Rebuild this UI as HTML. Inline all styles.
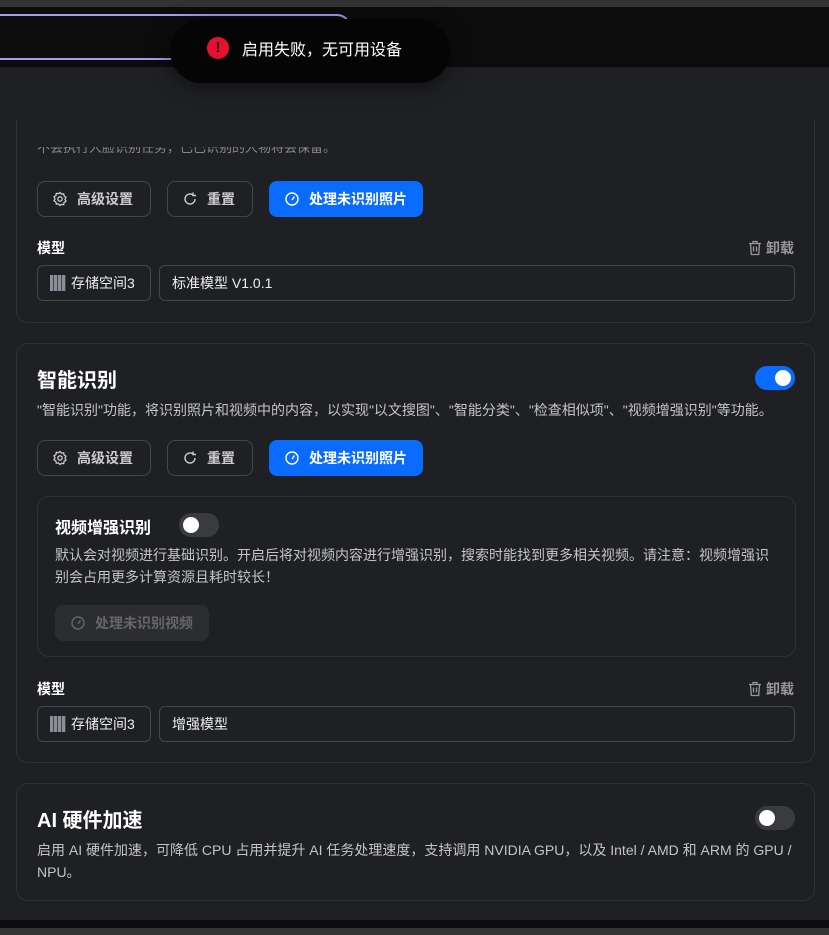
<!DOCTYPE html>
<html><head><meta charset="utf-8"><style>
*{box-sizing:border-box;margin:0;padding:0}
body{width:829px;height:935px;overflow:hidden;background:#1f2023;font-family:"Liberation Sans","Noto Sans CJK SC",sans-serif;color:#e6e6e6;position:relative}
.top{position:absolute;left:0;top:0;width:829px;height:7px;background:#333}
.hdr{position:absolute;left:0;top:7px;width:829px;height:60px;background:#0c0c0c}
.search{position:absolute;left:-20px;top:14px;width:371px;height:46px;border:2px solid #a99cf0;border-radius:14px}
.aibtn{position:absolute;left:258px;top:22px;width:90px;height:36px;border-radius:18px;background:#2a2a2e;color:#666;font-size:14px;padding:9px 10px}
.toast{position:absolute;left:170px;top:19px;width:280px;height:64px;border-radius:32px;background:#050505;box-shadow:0 4px 20px rgba(0,0,0,.5);display:flex;align-items:center;padding-left:37px;padding-bottom:7px;font-size:16px;color:#fff}
.toast .ic{width:22px;height:22px;border-radius:50%;background:#e8112d;color:#111;font-weight:bold;font-size:15px;text-align:center;line-height:22px;margin-right:13px}
.card{position:absolute;left:16px;width:799px;border:1px solid #303136;border-radius:12px}
.btn{position:absolute;height:36px;border:1px solid #45464b;border-radius:8px;font-size:14px;font-weight:bold;color:#ccc;display:flex;align-items:center;padding-left:14px}
.btn svg{margin-right:9px}
.blue{background:#0a6cff;border-color:#0a6cff;color:#fff}
.lbl{position:absolute;font-size:14px;font-weight:bold;color:#fff}
.unl{position:absolute;right:20px;font-size:14px;font-weight:bold;color:#999;display:flex;align-items:center}
.unl svg{margin-right:4px}
.inp{position:absolute;height:36px;border:1px solid #45464b;border-radius:6px;font-size:14px;color:#eee;display:flex;align-items:center;padding-left:12px}
.title{position:absolute;font-size:20px;font-weight:bold;color:#fff}
.desc{position:absolute;font-size:14px;color:#c4c4c4;line-height:22px}
.tog{position:absolute;width:40px;height:24px;border-radius:12px}
.tog i{position:absolute;top:4px;width:16px;height:16px;border-radius:50%;background:#fff}
.bot{position:absolute;left:0;top:920px;width:829px;height:15px;background:#0c0c0c}
.bot2{position:absolute;left:0;top:928px;width:829px;height:7px;background:#333}
</style></head><body>
<div class="top"></div>
<div class="hdr"></div>
<div class="search"></div>
<div class="aibtn">AI 搜索</div>
<div class="toast"><div class="ic">!</div>启用失败，无可用设备</div>

<div class="card" style="top:120px;height:203px;border-top:none;border-radius:0 0 12px 12px">
 <div class="desc" style="left:20px;top:27px;color:#888;font-size:13px;height:10px;overflow:hidden;line-height:10px"><div style="margin-top:-4px">不会执行人脸识别任务，已已识别的人物将会保留。</div></div>
 <div class="btn" style="left:20px;top:61px;width:114px"><svg width="16" height="16" viewBox="0 0 16 16" fill="none" stroke="#ccc" stroke-width="1.3"><circle cx="8" cy="8" r="2.2"/><path d="M8 1.5l1.5 1.6 2.2-.3.4 2.2 1.9 1.2-1 2 1 2-1.9 1.2-.4 2.2-2.2-.3L8 14.5l-1.5-1.6-2.2.3-.4-2.2-1.9-1.2 1-2-1-2 1.9-1.2.4-2.2 2.2.3z"/></svg>高级设置</div>
 <div class="btn" style="left:150px;top:61px;width:86px"><svg width="16" height="16" viewBox="0 0 16 16" fill="none" stroke="#ccc" stroke-width="1.4"><path d="M13 8A5 5 0 1 1 11 4M11 1.5V4.5H14"/></svg>重置</div>
 <div class="btn blue" style="left:252px;top:61px;width:154px"><svg width="16" height="16" viewBox="0 0 16 16" fill="none" stroke="#fff" stroke-width="1.4"><circle cx="8" cy="8" r="6"/><path d="M8 9l2.5-3.5"/></svg>处理未识别照片</div>
 <div class="lbl" style="left:20px;top:118px">模型</div>
 <div class="unl" style="top:118px"><svg width="14" height="16" viewBox="0 0 14 16" fill="none" stroke="#999" stroke-width="1.3"><path d="M1 3.5h12M5 3.5V1.5h4v2M2.5 3.5l.8 11h7.4l.8-11M5.5 6.5v5M8.5 6.5v5"/></svg>卸载</div>
 <div class="inp" style="left:20px;top:145px;width:114px"><span style="display:inline-block;width:16px;height:16px;background:repeating-linear-gradient(90deg,#8a8f9c 0 3px,#444 3px 4px);margin-right:5px"></span>存储空间3</div>
 <div class="inp" style="left:142px;top:145px;width:636px">标准模型 V1.0.1</div>
</div>

<div class="card" style="top:343px;height:420px">
 <div class="title" style="left:20px;top:20px">智能识别</div>
 <div class="tog" style="right:19px;top:22px;background:#0a6cff"><i style="right:4px"></i></div>
 <div class="desc" style="left:20px;top:55px;white-space:nowrap">"智能识别"功能，将识别照片和视频中的内容，以实现"以文搜图"、"智能分类"、"检查相似项"、"视频增强识别"等功能。</div>
 <div class="btn" style="left:20px;top:96px;width:114px"><svg width="16" height="16" viewBox="0 0 16 16" fill="none" stroke="#ccc" stroke-width="1.3"><circle cx="8" cy="8" r="2.2"/><path d="M8 1.5l1.5 1.6 2.2-.3.4 2.2 1.9 1.2-1 2 1 2-1.9 1.2-.4 2.2-2.2-.3L8 14.5l-1.5-1.6-2.2.3-.4-2.2-1.9-1.2 1-2-1-2 1.9-1.2.4-2.2 2.2.3z"/></svg>高级设置</div>
 <div class="btn" style="left:150px;top:96px;width:86px"><svg width="16" height="16" viewBox="0 0 16 16" fill="none" stroke="#ccc" stroke-width="1.4"><path d="M13 8A5 5 0 1 1 11 4M11 1.5V4.5H14"/></svg>重置</div>
 <div class="btn blue" style="left:252px;top:96px;width:154px"><svg width="16" height="16" viewBox="0 0 16 16" fill="none" stroke="#fff" stroke-width="1.4"><circle cx="8" cy="8" r="6"/><path d="M8 9l2.5-3.5"/></svg>处理未识别照片</div>
 <div style="position:absolute;left:20px;top:152px;width:759px;height:161px;border:1px solid #303136;border-radius:12px">
  <div style="position:absolute;left:17px;top:17px;font-size:16px;font-weight:bold;color:#fff">视频增强识别</div>
  <div class="tog" style="left:141px;top:16px;background:#3a3b3f"><i style="left:4px"></i></div>
  <div class="desc" style="left:17px;top:47px;width:715px">默认会对视频进行基础识别。开启后将对视频内容进行增强识别，搜索时能找到更多相关视频。请注意：视频增强识别会占用更多计算资源且耗时较长！</div>
  <div class="btn" style="left:17px;top:108px;width:154px;background:#2c2d31;border-color:#2c2d31;color:#666"><svg width="16" height="16" viewBox="0 0 16 16" fill="none" stroke="#666" stroke-width="1.4"><circle cx="8" cy="8" r="6"/><path d="M8 9l2.5-3.5"/></svg>处理未识别视频</div>
 </div>
 <div class="lbl" style="left:20px;top:335px">模型</div>
 <div class="unl" style="top:335px"><svg width="14" height="16" viewBox="0 0 14 16" fill="none" stroke="#999" stroke-width="1.3"><path d="M1 3.5h12M5 3.5V1.5h4v2M2.5 3.5l.8 11h7.4l.8-11M5.5 6.5v5M8.5 6.5v5"/></svg>卸载</div>
 <div class="inp" style="left:20px;top:362px;width:114px"><span style="display:inline-block;width:16px;height:16px;background:repeating-linear-gradient(90deg,#8a8f9c 0 3px,#444 3px 4px);margin-right:5px"></span>存储空间3</div>
 <div class="inp" style="left:142px;top:362px;width:636px">增强模型</div>
</div>

<div class="card" style="top:783px;height:118px">
 <div class="title" style="left:20px;top:20px">AI 硬件加速</div>
 <div class="tog" style="right:19px;top:22px;background:#3a3b3f"><i style="left:4px"></i></div>
 <div class="desc" style="left:20px;top:55px;width:760px">启用 AI 硬件加速，可降低 CPU 占用并提升 AI 任务处理速度，支持调用 NVIDIA GPU，以及 Intel / AMD 和 ARM 的 GPU / NPU。</div>
</div>
<div class="bot"></div><div class="bot2"></div>
</body></html>
